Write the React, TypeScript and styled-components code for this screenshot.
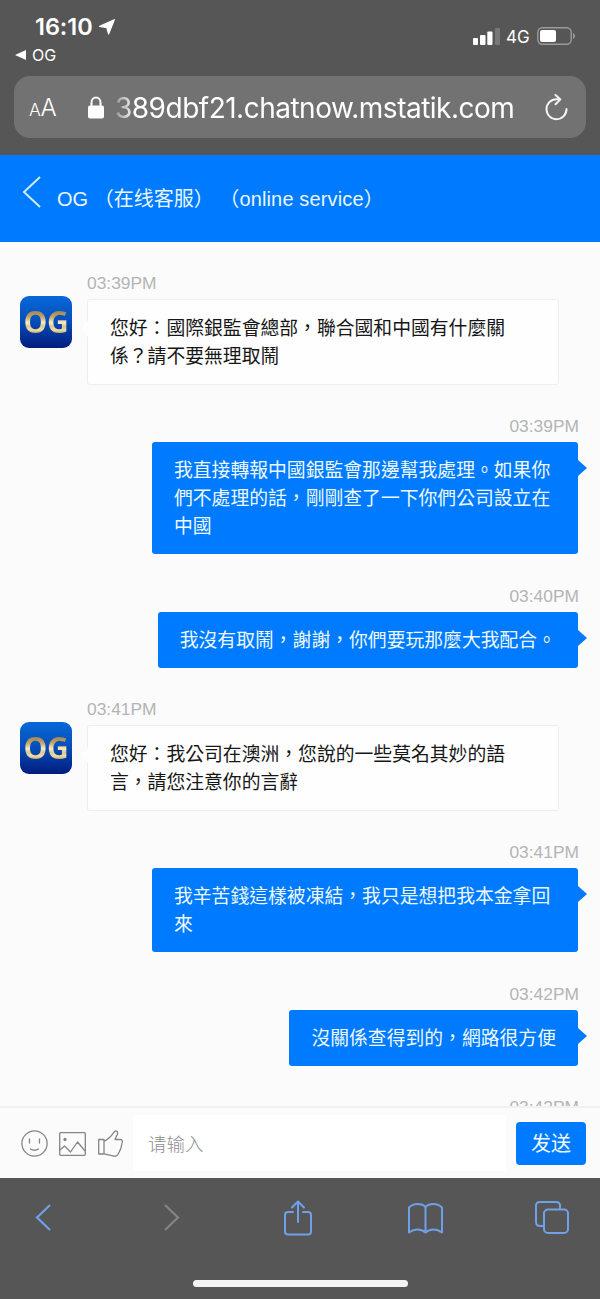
import React from 'react';
import styled, { createGlobalStyle } from 'styled-components';

const GlobalStyle = createGlobalStyle`
  * { box-sizing: border-box; }
  body { margin: 0; background: #565656; }
  svg { display: block; flex: none; overflow: visible; }
`;

const UI = `Inter, "Liberation Sans", sans-serif`;
const TC = `"Liberation Sans", "Noto Sans CJK TC", sans-serif`;
const SC = `"Liberation Sans", "Noto Sans CJK SC", sans-serif`;

const Screen = styled.div`
  width: 600px;
  height: 1299px;
  display: flex;
  flex-direction: column;
  overflow: hidden;
  background: #fbfbfc;
`;

const BrowserTop = styled.div`
  height: 155px;
  flex: none;
  background: #565656;
  color: #fff;
  font-family: ${UI};
`;

const StatusBar = styled.div`
  height: 76px;
  display: flex;
  justify-content: space-between;
  padding: 12px 25px 0 15px;
`;

const Clock = styled.div`
  display: flex;
  align-items: center;
  gap: 6px;
  padding-left: 20px;
  font-size: 23.5px;
  line-height: 29px;
  font-weight: 600;
  letter-spacing: -0.05px;
`;

const BackToApp = styled.div`
  display: flex;
  align-items: center;
  gap: 6px;
  height: 27px;
  font-size: 16px;
  font-weight: 400;
`;

const Signals = styled.div`
  display: flex;
  align-items: center;
  height: 48px;
  font-size: 17px;
  font-weight: 400;
`;

const Network = styled.span`
  width: 24px;
  margin: 1px 7px 0 6px;
  letter-spacing: -0.1px;
`;

const AddressBar = styled.div`
  height: 62px;
  margin: 0 14px;
  padding: 0 18px 0 15px;
  border-radius: 16px;
  background: #727272;
  display: flex;
  align-items: center;
`;

const TextSize = styled.div`
  width: 59px;
  padding-top: 3px;
  font-size: 24px;
  line-height: 30px;
  font-weight: 300;
  letter-spacing: -0.3px;
  small { font-size: 17.5px; }
`;

const Url = styled.div`
  flex: 1;
  margin-left: 11px;
  padding-top: 2px;
  font-size: 28px;
  line-height: 36px;
  letter-spacing: -0.5px;
  white-space: nowrap;
  mask-image: linear-gradient(90deg, rgba(0, 0, 0, 0.25), #000 20px);
`;

const ChatHeader = styled.header`
  height: 87px;
  flex: none;
  display: flex;
  align-items: center;
  gap: 16px;
  padding-left: 23px;
  background: #007bff;
  color: #e9f6ff;
  font: 20px/28px ${SC};
`;

const BackIcon = styled.svg`
  margin-top: -14px;
`;

const Title = styled.h1`
  margin: 0;
  font: inherit;
  white-space: pre;
`;

const TitleLatin = styled.span`
  letter-spacing: 0.15px;
`;

const Messages = styled.main`
  height: 864px;
  flex: none;
  overflow: hidden;
  display: flex;
  flex-direction: column;
  gap: 31.35px;
  padding: 31px 21px 0 20px;
`;

const Row = styled.div<{ $mine?: boolean }>`
  display: flex;
  flex: none;
  gap: 15px;
  justify-content: ${p => (p.$mine ? 'flex-end' : 'flex-start')};
`;

const Avatar = styled.div`
  width: 52px;
  height: 52px;
  margin-top: 23px;
  border-radius: 9px;
  display: flex;
  align-items: center;
  justify-content: center;
  background: linear-gradient(#0868d8, #0650bd 45%, #021c7d);
`;

const AvatarText = styled.span`
  font: 700 30px/36px "Open Sans", sans-serif;
  letter-spacing: -0.4px;
  color: transparent;
  background: linear-gradient(#a58a55 22%, #c4a568 36%, #f7ecc6 52%, #d9c894 62%, #f0dfa8 72%, #b8924a 84%);
  background-clip: text;
`;

const Entry = styled.div<{ $mine?: boolean }>`
  display: flex;
  flex-direction: column;
  align-items: ${p => (p.$mine ? 'flex-end' : 'flex-start')};
`;

const Time = styled.time`
  height: 26px;
  font: 17.4px/21px ${TC};
  color: #b4b4b6;
`;

const Bubble = styled.div<{ $mine?: boolean; $width?: number }>`
  position: relative;
  width: ${p => (p.$width ? `${p.$width}px` : 'auto')};
  margin-right: ${p => (p.$mine ? 1 : 0)}px;
  padding: 15px 22px 13px;
  border: ${p => (p.$mine ? 'none' : '1px solid #eeeeef')};
  border-radius: 3px;
  background: ${p => (p.$mine ? '#007bff' : '#fefefe')};
  color: ${p => (p.$mine ? '#eef8ff' : '#161616')};
  font: 18.82px/28px ${TC};
  white-space: nowrap;

  &::after {
    content: '';
    position: absolute;
    top: ${p => (p.$mine ? 18 : 21)}px;
    ${p =>
      p.$mine
        ? 'right: -9px; border-left: 9px solid #007bff;'
        : 'left: -7px; border-right: 7px solid #fefefe;'}
    border-top: 8px solid transparent;
    border-bottom: 8px solid transparent;
  }
`;

const Composer = styled.div`
  height: 72px;
  flex: none;
  display: flex;
  align-items: center;
  padding: 0 14px 0 21px;
  border-top: 2px solid #f1f1f2;
  background: #fbfbfc;
`;

const Tools = styled.div`
  display: flex;
  align-items: center;
  gap: 11px;
  width: 112px;
  margin-top: 1px;
`;

const Field = styled.div`
  flex: 1;
  height: 56px;
  margin-right: 10px;
  padding-left: 15px;
  border-radius: 4px;
  background: #fff;
  color: #8e8e90;
  font: 300 18.5px/59px ${SC};
`;

const Send = styled.button`
  width: 70px;
  height: 43px;
  margin-top: 1px;
  padding: 2px 0 0;
  border: 0;
  border-radius: 4px;
  background: #007bff;
  color: #eef8ff;
  font: 20px/41px ${SC};
`;

const BrowserBottom = styled.nav`
  height: 121px;
  flex: none;
  display: flex;
  flex-direction: column;
  justify-content: space-between;
  align-items: center;
  padding: 21px 0 12px;
  background: #565656;
`;

const NavIcons = styled.div`
  width: 100%;
  display: flex;
  justify-content: space-between;
  align-items: center;
  padding: 0 31px 0 25px;
`;

const NavItem = styled.div`
  width: 35px;
  height: 37px;
  display: flex;
  align-items: center;
  justify-content: center;
`;

const HomeIndicator = styled.div`
  width: 215px;
  height: 7px;
  border-radius: 4px;
  background: #f3f3f3;
`;

type Message = { time: string; lines: string[]; mine?: boolean; width?: number };

const messages: Message[] = [
  { time: '03:39PM', width: 472, lines: ['您好：國際銀監會總部，聯合國和中國有什麼關', '係？請不要無理取鬧'] },
  { time: '03:39PM', mine: true, width: 426, lines: ['我直接轉報中國銀監會那邊幫我處理。如果你', '們不處理的話，剛剛查了一下你們公司設立在', '中國'] },
  { time: '03:40PM', mine: true, lines: ['我沒有取鬧，謝謝，你們要玩那麼大我配合。'] },
  { time: '03:41PM', width: 472, lines: ['您好：我公司在澳洲，您說的一些莫名其妙的語', '言，請您注意你的言辭'] },
  { time: '03:41PM', mine: true, width: 426, lines: ['我辛苦錢這樣被凍結，我只是想把我本金拿回', '來'] },
  { time: '03:42PM', mine: true, lines: ['沒關係查得到的，網路很方便'] },
  { time: '03:42PM', mine: true, lines: [] },
];

export default function App() {
  return (
    <Screen>
      <GlobalStyle />
      <BrowserTop>
        <StatusBar>
          <div>
            <Clock>
              16:10
              <svg width="16" height="16" viewBox="0 0 16 16" fill="#fff">
                <path d="M15.3.7 9.6 15 7.8 8.6.6 7.4Z" stroke="#fff" strokeWidth="1.2" strokeLinejoin="round" />
              </svg>
            </Clock>
            <BackToApp>
              <svg width="11" height="10" viewBox="0 0 11 10" fill="#fff">
                <path d="M0 5 11 0V10Z" />
              </svg>
              OG
            </BackToApp>
          </div>
          <Signals>
            <svg width="27" height="17" viewBox="0 0 27 17" fill="#fff">
              <rect y="10" width="5" height="7" rx="1" />
              <rect x="7" y="7" width="5.5" height="10" rx="1" />
              <rect x="14.3" y="3.5" width="5.2" height="13.5" rx="1" />
              <rect x="22" y="0" width="5" height="17" rx="1" fill="#777" />
            </svg>
            <Network>4G</Network>
            <svg width="38" height="18" viewBox="0 0 38 18">
              <rect x=".8" y=".8" width="33.4" height="16.4" rx="4.5" fill="none" stroke="#9b9b9b" strokeWidth="1.4" />
              <rect x="3" y="3" width="16" height="12" rx="2" fill="#fff" />
              <path d="M36 6q2 1 2 3t-2 3Z" fill="#9b9b9b" />
            </svg>
          </Signals>
        </StatusBar>
        <AddressBar>
          <TextSize><small>A</small>A</TextSize>
          <svg width="16" height="23" viewBox="0 0 16 23">
            <path d="M3.5 10V6.5a4.5 5 0 0 1 9 0V10" fill="none" stroke="#fff" strokeWidth="2" />
            <rect y="9.5" width="16" height="13" rx="2" fill="#fff" />
          </svg>
          <Url>389dbf21.chatnow.mstatik.com</Url>
          <svg width="23" height="26" viewBox="0 0 23 26" fill="none" stroke="#f4f4f4" strokeWidth="2" strokeLinecap="round" strokeLinejoin="round">
            <path d="M15 5.2H11.5A10 10 0 1 0 21.5 15M10.5 1 15.4 5.4 10.5 10.2" />
          </svg>
        </AddressBar>
      </BrowserTop>

      <ChatHeader>
        <BackIcon width="18" height="32" viewBox="0 0 18 32" fill="none" stroke="#cdeaff" strokeWidth="2">
          <path d="M17 1 1 16 17 31" />
        </BackIcon>
        <Title>OG （在线客服） <TitleLatin>（online service）</TitleLatin></Title>
      </ChatHeader>

      <Messages>
        {messages.map((m, i) => (
          <Row key={i} $mine={m.mine}>
            {!m.mine && <Avatar><AvatarText>OG</AvatarText></Avatar>}
            <Entry $mine={m.mine}>
              <Time>{m.time}</Time>
              {m.lines.length > 0 && (
                <Bubble $mine={m.mine} $width={m.width}>
                  {m.lines.map(line => <div key={line}>{line}</div>)}
                </Bubble>
              )}
            </Entry>
          </Row>
        ))}
      </Messages>

      <Composer>
        <Tools>
          <svg width="27" height="27" viewBox="0 0 27 27" fill="none" stroke="#858585" strokeWidth="1.3" strokeLinecap="round">
            <circle cx="13.5" cy="13.5" r="12.6" />
            <path d="M8.5 9v4M18.5 9v4M9.5 19q4 2.5 8 0" />
          </svg>
          <svg width="27" height="24" viewBox="0 0 27 24" fill="none" stroke="#858585" strokeWidth="1.3" strokeLinejoin="round">
            <rect x=".7" y=".7" width="25.6" height="22.6" rx="1" />
            <path d="M1 18 5.5 14 11.5 20 18.5 10 26 19" />
            <circle cx="6" cy="7.5" r="1" fill="#858585" />
          </svg>
          <svg width="25" height="27" viewBox="-1 0 25 27" fill="none" stroke="#858585" strokeWidth="1.3" strokeLinejoin="round">
            <path d="M.7 9.5H6V24H.7ZM6 11.5C10 9.5 13.5 6 16 2.2 17.5 0 20.3 1 19.6 3.8L17 9.5h5.5c1.5 0 2 1.2 1.8 2.5-.5 4.5-1.8 8.5-4.3 12.5-1 1.6-2.2 2-4 1.6L6 23.8" />
          </svg>
        </Tools>
        <Field>请输入</Field>
        <Send>发送</Send>
      </Composer>

      <BrowserBottom>
        <NavIcons>
          <NavItem>
            <svg width="16" height="27" viewBox="0 0 16 27" fill="none" stroke="#6fa0e8" strokeWidth="2.2">
              <path d="M15 1 2 13.5 15 26" />
            </svg>
          </NavItem>
          <NavItem>
            <svg width="16" height="27" viewBox="-2 0 16 27" fill="none" stroke="#858585" strokeWidth="2.2">
              <path d="M1 1 14 13.5 1 26" />
            </svg>
          </NavItem>
          <NavItem>
            <svg width="28" height="36" viewBox="-1 0 28 36" fill="none" stroke="#6fa0e8" strokeWidth="2" strokeLinecap="round" strokeLinejoin="round">
              <path d="M9 12H4Q1 12 1 15V31.5Q1 34.5 4 34.5H24Q27 34.5 27 31.5V15Q27 12 24 12H19M14 22V1.5M8 7.5 14 1.5 20 7.5" />
            </svg>
          </NavItem>
          <NavItem>
            <svg width="35" height="31" viewBox="-1 -1 35 31" fill="none" stroke="#6fa0e8" strokeWidth="2" strokeLinejoin="round">
              <path d="M17.5 4Q15 1 9.5 1 4.5 1 1 4.5V29.5Q5 26.5 9.5 26.5T17.5 29.5Q21 26.5 25.5 26.5T34 29.5V4.5Q30.5 1 25.5 1 20 1 17.5 4V29.5" />
            </svg>
          </NavItem>
          <NavItem>
            <svg width="34" height="33" viewBox="0 0 34 33" fill="none" stroke="#6fa0e8" strokeWidth="2">
              <rect x="9" y="8.5" width="24" height="23.5" rx="4" />
              <path d="M9 25H5Q1 25 1 21V5Q1 1 5 1H21Q25 1 25 5V8.5" />
            </svg>
          </NavItem>
        </NavIcons>
        <HomeIndicator />
      </BrowserBottom>
    </Screen>
  );
}
